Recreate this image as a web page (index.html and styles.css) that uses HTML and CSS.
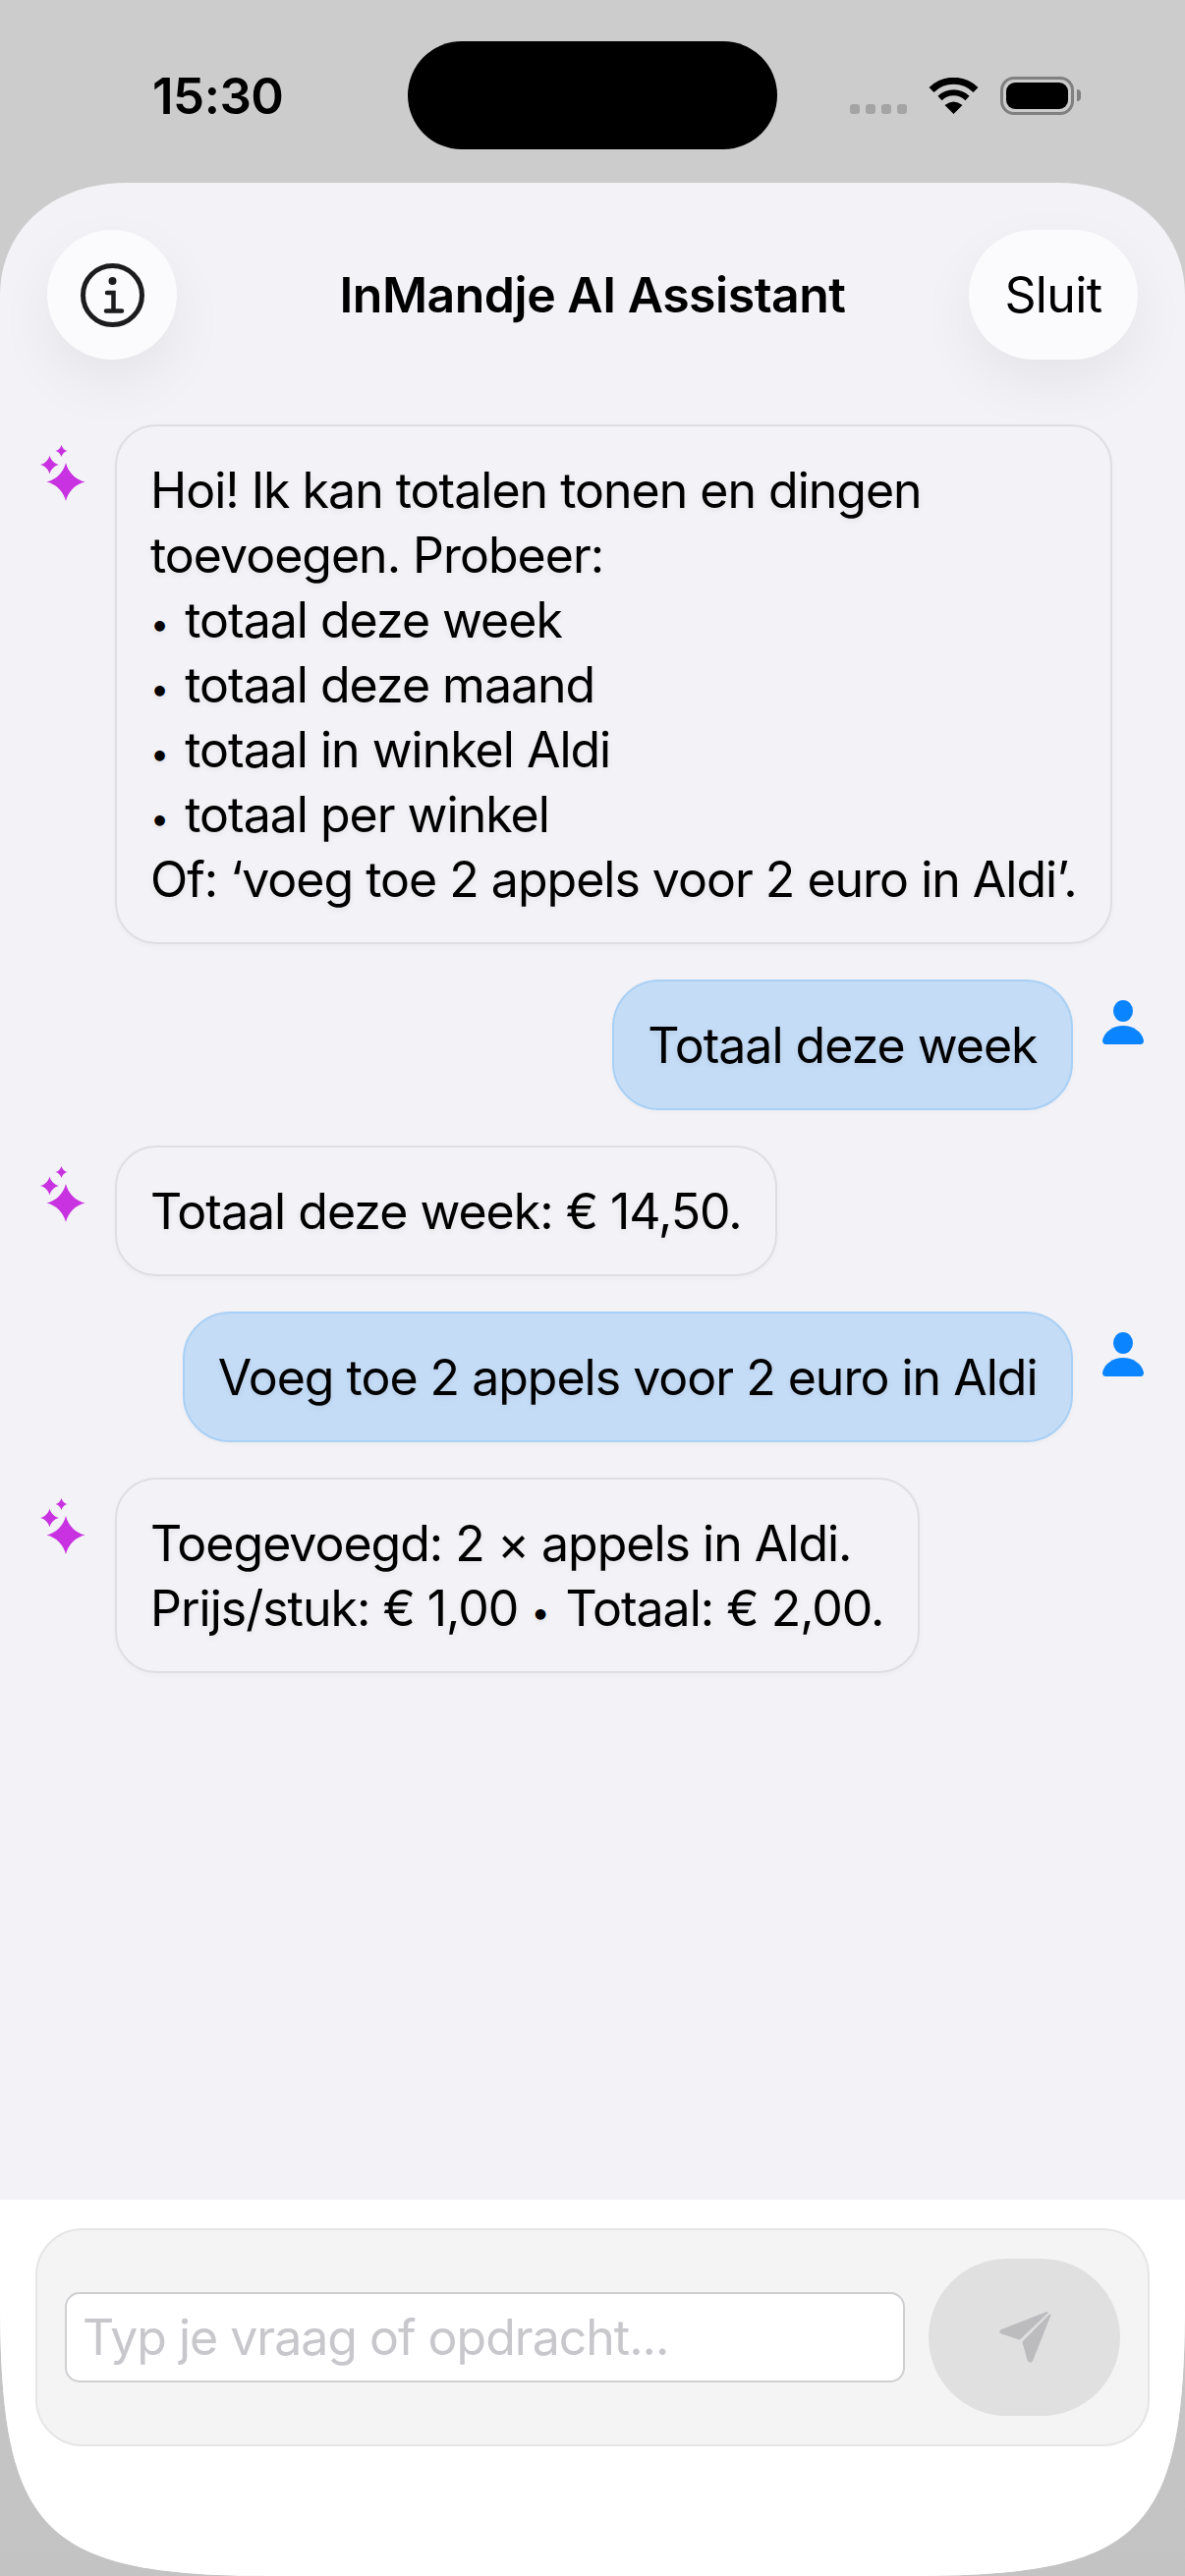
FILE: index.html
```html
<!DOCTYPE html>
<html lang="nl">
<head>
  <meta charset="UTF-8">
  <title>InMandje AI Assistant</title>
  <link rel="stylesheet" href="styles.css">
</head>
<body>

  <div class="status-bar">
    <span class="status-bar__time">15:30</span>
    <div class="status-bar__island"></div>
    <div class="status-bar__icons">
      <div class="signal"><i></i><i></i><i></i><i></i></div>
      <svg class="wifi" viewBox="0 0 51 37" width="51" height="37">
        <path d="M3 12.5 A32 32 0 0 1 48 12.5" fill="none" stroke="#000" stroke-width="7"/>
        <path d="M11.5 21 A20 20 0 0 1 39.5 21" fill="none" stroke="#000" stroke-width="6"/>
        <path d="M25.5 37 L16.5 28 Q25.5 21 34.5 28 Z" fill="#000"/>
      </svg>
      <div class="battery"><div class="battery__level"></div></div>
      <div class="battery__cap"></div>
    </div>
  </div>

  <main class="sheet">
    <header class="sheet__header">
      <button class="round-btn round-btn--info" aria-label="Info">
        <svg viewBox="0 0 65 65" width="65" height="65">
          <circle cx="32.5" cy="32.5" r="30" fill="none" stroke="#1c1c1e" stroke-width="5"/>
          <circle cx="32.5" cy="18" r="4" fill="#1c1c1e"/>
          <path d="M27 30 H33.5 V48 M26 48.5 H42" fill="none" stroke="#1c1c1e" stroke-width="4.5" stroke-linecap="round"/>
        </svg>
      </button>
      <h1 class="sheet__title">InMandje AI Assistant</h1>
      <button class="round-btn round-btn--close">Sluit</button>
    </header>

    <section class="chat">
      <div class="msg msg--bot">
        <svg class="msg__icon" viewBox="0 0 46 57" width="46" height="57">
          <path fill="#c832e0" d="M26 18 C28.3 27.75 35.75 35.2 45.5 37.5 C35.75 39.8 28.3 47.25 26 57 C23.7 47.25 16.25 39.8 6.5 37.5 C16.25 35.2 23.7 27.75 26 18Z"/>
          <path fill="#c832e0" d="M9.5 10.5 C10.6 15.25 14.25 18.9 19 20 C14.25 21.1 10.6 24.75 9.5 29.5 C8.4 24.75 4.75 21.1 0 20 C4.75 18.9 8.4 15.25 9.5 10.5Z"/>
          <path fill="#c832e0" d="M21.5 0 C22.2 3 24.5 5.3 27.5 6 C24.5 6.7 22.2 9 21.5 12 C20.8 9 18.5 6.7 15.5 6 C18.5 5.3 20.8 3 21.5 0Z"/>
        </svg>
        <div class="bubble">Hoi! Ik kan totalen tonen en dingen<br>toevoegen. Probeer:<br><span class="dot">•</span> totaal deze week<br><span class="dot">•</span> totaal deze maand<br><span class="dot">•</span> totaal in winkel Aldi<br><span class="dot">•</span> totaal per winkel<br>Of: ‘voeg toe 2 appels voor 2 euro in Aldi’.</div>
      </div>

      <div class="msg msg--user">
        <div class="bubble bubble--user">Totaal deze week</div>
        <svg class="msg__icon" viewBox="0 0 42 45" width="42" height="45">
          <ellipse cx="21" cy="11" rx="10" ry="11" fill="#0a84ff"/>
          <path fill="#0a84ff" d="M3.5 45 H38.5 Q42 45 42 41 C40 32 31 26 21 26 C11 26 2 32 0 41 Q0 45 3.5 45Z"/>
        </svg>
      </div>

      <div class="msg msg--bot">
        <svg class="msg__icon" viewBox="0 0 46 57" width="46" height="57">
          <path fill="#c832e0" d="M26 18 C28.3 27.75 35.75 35.2 45.5 37.5 C35.75 39.8 28.3 47.25 26 57 C23.7 47.25 16.25 39.8 6.5 37.5 C16.25 35.2 23.7 27.75 26 18Z"/>
          <path fill="#c832e0" d="M9.5 10.5 C10.6 15.25 14.25 18.9 19 20 C14.25 21.1 10.6 24.75 9.5 29.5 C8.4 24.75 4.75 21.1 0 20 C4.75 18.9 8.4 15.25 9.5 10.5Z"/>
          <path fill="#c832e0" d="M21.5 0 C22.2 3 24.5 5.3 27.5 6 C24.5 6.7 22.2 9 21.5 12 C20.8 9 18.5 6.7 15.5 6 C18.5 5.3 20.8 3 21.5 0Z"/>
        </svg>
        <div class="bubble">Totaal deze week: € 14,50.</div>
      </div>

      <div class="msg msg--user">
        <div class="bubble bubble--user">Voeg toe 2 appels voor 2 euro in Aldi</div>
        <svg class="msg__icon" viewBox="0 0 42 45" width="42" height="45">
          <ellipse cx="21" cy="11" rx="10" ry="11" fill="#0a84ff"/>
          <path fill="#0a84ff" d="M3.5 45 H38.5 Q42 45 42 41 C40 32 31 26 21 26 C11 26 2 32 0 41 Q0 45 3.5 45Z"/>
        </svg>
      </div>

      <div class="msg msg--bot">
        <svg class="msg__icon" viewBox="0 0 46 57" width="46" height="57">
          <path fill="#c832e0" d="M26 18 C28.3 27.75 35.75 35.2 45.5 37.5 C35.75 39.8 28.3 47.25 26 57 C23.7 47.25 16.25 39.8 6.5 37.5 C16.25 35.2 23.7 27.75 26 18Z"/>
          <path fill="#c832e0" d="M9.5 10.5 C10.6 15.25 14.25 18.9 19 20 C14.25 21.1 10.6 24.75 9.5 29.5 C8.4 24.75 4.75 21.1 0 20 C4.75 18.9 8.4 15.25 9.5 10.5Z"/>
          <path fill="#c832e0" d="M21.5 0 C22.2 3 24.5 5.3 27.5 6 C24.5 6.7 22.2 9 21.5 12 C20.8 9 18.5 6.7 15.5 6 C18.5 5.3 20.8 3 21.5 0Z"/>
        </svg>
        <div class="bubble">Toegevoegd: 2 × appels in Aldi.<br>Prijs/stuk: € 1,00 <span class="dot">•</span> Totaal: € 2,00.</div>
      </div>
    </section>

    <footer class="composer">
      <div class="composer__card">
        <input class="composer__input" type="text" placeholder="Typ je vraag of opdracht...">
        <button class="composer__send" aria-label="Verstuur">
          <svg viewBox="0 0 62 60" width="62" height="60">
            <path fill="#bcbcbe" stroke="#bcbcbe" stroke-width="2" stroke-linejoin="round" d="M53.5 5 L7.5 23 Q5 24.5 7.5 25.5 L25.5 31.5 Z"/>
            <path fill="#bcbcbe" stroke="#bcbcbe" stroke-width="2" stroke-linejoin="round" d="M56.5 7.5 L29.5 35 L34.5 53 Q36.5 56.5 38.5 53 Z"/>
          </svg>
        </button>
      </div>
    </footer>
  </main>

</body>
</html>
```

FILE: styles.css
```css
* {
  box-sizing: border-box;
}

html, body {
  margin: 0;
  height: 100%;
  overflow: hidden;
}

body {
  width: 1206px;
  height: 2622px;
  display: flex;
  flex-direction: column;
  background: linear-gradient(#cccccc, #cccccc 60%, #c3c3c3);
  color: #000;
  font-family: Inter, "Noto Sans", sans-serif;
}

/* status bar */
.status-bar {
  height: 186px;
  flex: none;
  display: flex;
  align-items: flex-start;
  padding: 42px 0 0 155px;
}

.status-bar__time {
  width: 260px;
  margin-top: 25px;
  font-size: 51px;
  line-height: 62px;
  font-weight: 600;
  letter-spacing: -0.5px;
}

.status-bar__island {
  width: 376px;
  height: 110px;
  border-radius: 55px;
  background: #000;
}

.status-bar__icons {
  display: flex;
  align-items: flex-start;
  margin: 36px 0 0 74px;
}

.signal {
  display: flex;
  gap: 6px;
  margin: 28px 22px 0 0;
}

.signal i {
  width: 10px;
  height: 10px;
  border-radius: 3px;
  background: #a4a4a4;
}

.wifi {
  margin: 1px 22px 0 0;
}

.battery {
  width: 75px;
  height: 39px;
  padding: 3px;
  border: 3px solid #808080;
  border-radius: 14px;
}

.battery__level {
  width: 100%;
  height: 100%;
  border-radius: 9px;
  background: #000;
}

.battery__cap {
  width: 4px;
  height: 12px;
  margin: 13px 0 0 3px;
  border-radius: 0 4px 4px 0;
  background: #808080;
}

/* sheet, iOS style continuous corners */
.sheet {
  flex: 1;
  display: flex;
  flex-direction: column;
  overflow: hidden;
  clip-path: path("M0 115 C0 50 50 0 130 0 H1076 C1156 0 1206 50 1206 115 V2154 C1206 2390 1165 2436 929 2436 H277 C41 2436 0 2390 0 2154 Z");
  background: #f2f2f7;
}

.sheet__header {
  flex: none;
  display: grid;
  grid-template-columns: 1fr auto 1fr;
  align-items: center;
  padding: 48px 48px 0;
}

.sheet__title {
  margin: 0;
  font-size: 50px;
  line-height: 132px;
  font-weight: 560;
  letter-spacing: -0.5px;
}

.round-btn {
  height: 132px;
  padding: 0;
  border: 0;
  border-radius: 66px;
  background: #fbfbfe;
  box-shadow: 0 24px 60px rgba(0, 0, 0, 0.06);
  color: #000;
  font-family: inherit;
  font-size: 50px;
  letter-spacing: -0.6px;
}

.round-btn--info {
  width: 132px;
  display: flex;
  align-items: center;
  justify-content: center;
}

.round-btn--close {
  width: 172px;
  justify-self: end;
}

/* chat */
.chat {
  flex: 1;
  display: flex;
  flex-direction: column;
  gap: 36px;
  padding: 66px 36px 0;
}

.msg {
  display: flex;
  align-items: flex-start;
}

.msg--bot {
  gap: 30px;
}

.msg--bot .msg__icon {
  margin: 21px 0 0 5px;
}

.msg--user {
  justify-content: flex-end;
  gap: 30px;
}

.msg--user .msg__icon {
  margin: 21px 6px 0 0;
}

.bubble {
  padding: 31.5px 34.5px 31.5px 34px;
  border: 2px solid #dedee3;
  border-radius: 42px;
  background: #f2f2f7;
  box-shadow: 0 2px 6px rgba(0, 0, 0, 0.03);
  font-size: 50px;
  line-height: 66px;
  letter-spacing: -1px;
  white-space: nowrap;
  text-shadow: 0 2px 6px rgba(0, 0, 0, 0.07);
}

.bubble--user {
  border-color: #a9d0f5;
  border-radius: 48px;
  background: #c5dcf6;
}

/* the Inter bullet is too big next to the text */
.dot {
  font-size: 34px;
  line-height: 0;
  vertical-align: 2px;
  margin-right: 4px;
}

/* composer */
.composer {
  height: 383px;
  flex: none;
  padding: 29px 36px 0;
  background: #fff;
}

.composer__card {
  height: 222px;
  display: flex;
  align-items: center;
  gap: 24px;
  padding: 0 28px;
  border: 2px solid #e5e5e5;
  border-radius: 48px;
  background: #f4f4f5;
}

.composer__input {
  flex: 1;
  min-width: 0;
  height: 92px;
  padding: 0 16px;
  border: 2px solid #cfcfd2;
  border-radius: 15px;
  outline: none;
  background: #fff;
  color: #000;
  font-family: inherit;
  font-size: 50px;
  letter-spacing: -1px;
}

.composer__input::placeholder {
  color: #c7c7cc;
  opacity: 1;
}

.composer__send {
  width: 195px;
  height: 160px;
  flex: none;
  display: flex;
  align-items: center;
  justify-content: center;
  padding: 0;
  border: 0;
  border-radius: 80px;
  background: #e0e0e0;
}
```
